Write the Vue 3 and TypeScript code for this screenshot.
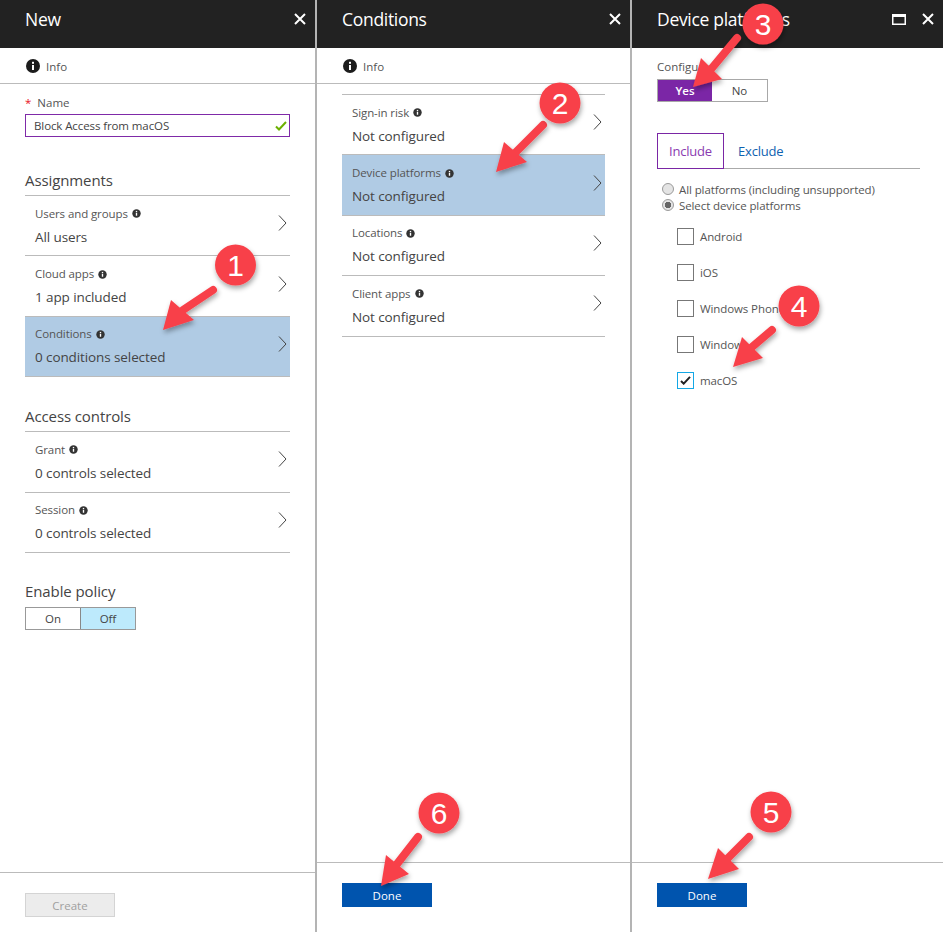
<script setup lang="ts">
interface Row { label: string; value: string; active?: boolean }
interface Mark { n: number; cx: number; cy: number; tail: [number, number]; neck: [number, number]; tip: [number, number]; a: [number, number]; b: [number, number] }

const assignments: Row[] = [
  { label: 'Users and groups', value: 'All users' },
  { label: 'Cloud apps', value: '1 app included' },
  { label: 'Conditions', value: '0 conditions selected', active: true },
]
const access: Row[] = [
  { label: 'Grant', value: '0 controls selected' },
  { label: 'Session', value: '0 controls selected' },
]
const conditions: Row[] = [
  { label: 'Sign-in risk', value: 'Not configured' },
  { label: 'Device platforms', value: 'Not configured', active: true },
  { label: 'Locations', value: 'Not configured' },
  { label: 'Client apps', value: 'Not configured' },
]
const platforms = [
  { name: 'Android', on: false },
  { name: 'iOS', on: false },
  { name: 'Windows Phone', on: false },
  { name: 'Windows', on: false },
  { name: 'macOS', on: true },
]
const marks: Mark[] = [
  { n: 1, cx: 235.5, cy: 265, tail: [213, 290], neck: [183, 310], tip: [163, 330], a: [171, 300], b: [194, 320] },
  { n: 2, cx: 560, cy: 103, tail: [543, 125], neck: [516, 152], tip: [496, 172], a: [504, 142], b: [527, 162] },
  { n: 3, cx: 763, cy: 24, tail: [737, 38], neck: [712, 68], tip: [693, 87], a: [701, 58], b: [722, 79] },
  { n: 4, cx: 799, cy: 306, tail: [772, 330], neck: [752, 347], tip: [733, 367], a: [742, 337], b: [763, 358] },
  { n: 5, cx: 771, cy: 812, tail: [749, 837], neck: [728, 858], tip: [708, 879], a: [718, 848], b: [739, 869] },
  { n: 6, cx: 439, cy: 813, tail: [418, 837], neck: [397, 864], tip: [381, 886], a: [386, 855], b: [409, 874] },
]
const pts = (m: Mark) => [m.tip, m.a, m.b].map((p) => p.join(',')).join(' ')
</script>

<template>
  <div class="page">
    <section class="blade first">
      <header class="head">
        <h1>New</h1>
        <svg class="close" viewBox="0 0 12 12"><path d="M1 1l10 10M11 1L1 11" /></svg>
      </header>
      <div class="info">
        <svg class="i-big" viewBox="0 0 16 16"><circle cx="8" cy="8" r="7" /><rect x="7" y="7" width="2" height="5" /><rect x="7" y="3.8" width="2" height="2" /></svg>
        <span>Info</span>
      </div>
      <div class="body">
        <div class="name-label"><span class="req">*</span><span class="nm">Name</span></div>
        <div class="name-input">
          <span>Block Access from macOS</span>
          <svg class="ok" viewBox="0 0 12 10"><path d="M1 5.500l3 3L11 1" /></svg>
        </div>
        <h2 class="sec assign">Assignments</h2>
        <ul class="rows">
          <li v-for="r in assignments" :key="r.label" class="row" :class="{ active: r.active }">
            <div class="txt">
              <div class="lbl">{{ r.label }}<svg class="i-small" viewBox="0 0 16 16"><circle cx="8" cy="8" r="7.5" /><rect x="6.8" y="7" width="2.4" height="5" /><rect x="6.8" y="3.4" width="2.4" height="2.4" /></svg></div>
              <div class="val">{{ r.value }}</div>
            </div>
            <svg class="chev" viewBox="0 0 9 16"><path d="M1 .5L8 8l-7 7.5" /></svg>
          </li>
        </ul>
        <h2 class="sec controls">Access controls</h2>
        <ul class="rows">
          <li v-for="r in access" :key="r.label" class="row">
            <div class="txt">
              <div class="lbl">{{ r.label }}<svg class="i-small" viewBox="0 0 16 16"><circle cx="8" cy="8" r="7.5" /><rect x="6.8" y="7" width="2.4" height="5" /><rect x="6.8" y="3.4" width="2.4" height="2.4" /></svg></div>
              <div class="val">{{ r.value }}</div>
            </div>
            <svg class="chev" viewBox="0 0 9 16"><path d="M1 .5L8 8l-7 7.5" /></svg>
          </li>
        </ul>
        <h2 class="sec policy">Enable policy</h2>
        <div class="toggle">
          <span>On</span>
          <span class="off">Off</span>
        </div>
      </div>
      <footer class="foot short">
        <button class="create" type="button">Create</button>
      </footer>
    </section>

    <section class="blade second">
      <header class="head">
        <h1>Conditions</h1>
        <svg class="close" viewBox="0 0 12 12"><path d="M1 1l10 10M11 1L1 11" /></svg>
      </header>
      <div class="info">
        <svg class="i-big" viewBox="0 0 16 16"><circle cx="8" cy="8" r="7" /><rect x="7" y="7" width="2" height="5" /><rect x="7" y="3.8" width="2" height="2" /></svg>
        <span>Info</span>
      </div>
      <div class="body">
        <ul class="rows cond">
          <li v-for="r in conditions" :key="r.label" class="row" :class="{ active: r.active }">
            <div class="txt">
              <div class="lbl">{{ r.label }}<svg class="i-small" viewBox="0 0 16 16"><circle cx="8" cy="8" r="7.5" /><rect x="6.8" y="7" width="2.4" height="5" /><rect x="6.8" y="3.4" width="2.4" height="2.4" /></svg></div>
              <div class="val">{{ r.value }}</div>
            </div>
            <svg class="chev" viewBox="0 0 9 16"><path d="M1 .5L8 8l-7 7.5" /></svg>
          </li>
        </ul>
      </div>
      <footer class="foot">
        <button class="done" type="button">Done</button>
      </footer>
    </section>

    <section class="blade third">
      <header class="head">
        <h1>Device platforms</h1>
        <svg class="max" viewBox="0 0 14 11"><path d="M0 0h14v11H0zM1.500 3v6.500h11V3z" fill-rule="evenodd" /></svg>
        <svg class="close" viewBox="0 0 12 12"><path d="M1 1l10 10M11 1L1 11" /></svg>
      </header>
      <div class="body plat">
        <div class="cfg">Configure</div>
        <div class="toggle yesno">
          <span class="yes">Yes</span>
          <span>No</span>
        </div>
        <div class="tabs">
          <span class="tab on">Include</span>
          <span class="tab">Exclude</span>
        </div>
        <div class="radio"><i class="dot"></i>All platforms (including unsupported)</div>
        <div class="radio"><i class="dot sel"></i>Select device platforms</div>
        <ul class="checks">
          <li v-for="p in platforms" :key="p.name">
            <span class="box" :class="{ on: p.on }">
              <svg v-if="p.on" viewBox="0 0 12 10"><path d="M1 5.500l3 3L11 1" /></svg>
            </span>
            {{ p.name }}
          </li>
        </ul>
      </div>
      <footer class="foot">
        <button class="done" type="button">Done</button>
      </footer>
    </section>

    <svg class="marks" viewBox="0 0 943 932" aria-hidden="true">
      <defs>
        <filter id="sh" x="-30%" y="-30%" width="170%" height="170%">
          <feDropShadow dx="1" dy="3" stdDeviation="2.500" flood-color="#000" flood-opacity=".35" />
        </filter>
      </defs>
      <g v-for="m in marks" :key="m.n">
        <g filter="url(#sh)">
          <line :x1="m.tail[0]" :y1="m.tail[1]" :x2="m.neck[0]" :y2="m.neck[1]" class="shaft" />
          <polygon :points="pts(m)" class="head-tri" />
        </g>
        <circle :cx="m.cx" :cy="m.cy" r="20.500" class="disc" filter="url(#sh)" />
        <text :x="m.cx" :y="m.cy + 11" class="num">{{ m.n }}</text>
      </g>
    </svg>
  </div>
</template>

<style>
html, body { margin: 0; background: #fff; }
</style>

<style scoped>
.page {
  position: relative;
  width: 943px;
  height: 932px;
  display: grid;
  grid-template-columns: 317px 315px 311px;
  overflow: hidden;
  font-family: "Open Sans", "Noto Sans", sans-serif;
  color: #444;
  background: #fff;
}
.blade {
  display: flex;
  flex-direction: column;
  height: 932px;
  box-sizing: border-box;
  border-right: 2px solid #b4b4b4;
  min-width: 0;
}
.third { border-right: 0; }
.head {
  height: 48px;
  flex: none;
  background: #222;
  display: flex;
  align-items: center;
  padding: 0 9px 10px 25px;
  box-sizing: border-box;
  color: #fff;
}
.head h1 {
  margin: 0;
  flex: 1;
  font-size: 17.500px;
  font-weight: 400;
  letter-spacing: -.3px;
}
.close { width: 12px; height: 12px; fill: none; stroke: #fff; stroke-width: 2; }
.max { width: 14px; height: 11px; fill: #fff; margin-right: 16px; }
.info {
  height: 36px;
  flex: none;
  display: flex;
  align-items: center;
  gap: 5px;
  padding: 1px 0 0 25px;
  box-sizing: border-box;
  border-bottom: 1px solid #bbb;
  font-size: 11.500px;
  color: #555;
}
.i-big { width: 16px; height: 16px; fill: #fff; }
.i-big circle { fill: #1c1c1c; }
.body { flex: 1; padding: 0 25px; min-height: 0; }
.name-label { margin-top: 10px; height: 20px; line-height: 17px; font-size: 11.500px; color: #555; }
.req { color: #e81123; }
.nm { margin-left: 6px; }
.name-input {
  height: 23px;
  box-sizing: border-box;
  border: 1px solid #7f2aa8;
  display: flex;
  align-items: center;
  justify-content: space-between;
  padding: 0 2px 0 8px;
  font-size: 11.500px;
  color: #444;
  letter-spacing: -.1px;
}
.ok { width: 12px; height: 10px; fill: none; stroke: #6cb000; stroke-width: 2; }
.sec { margin: 0; font-weight: 400; font-size: 15px; line-height: 20px; color: #444; letter-spacing: -.1px; }
.assign { margin-top: 33px; height: 25px; }
.controls { margin-top: 29px; height: 25px; }
.policy { margin-top: 28px; height: 26px; }
.rows { list-style: none; margin: 0; padding: 0; border-top: 1px solid #bbb; }
.cond { margin-top: 10px; }
.row {
  height: 60.400px;
  box-sizing: border-box;
  border-bottom: 1px solid #bbb;
  display: flex;
  align-items: center;
  justify-content: space-between;
  padding: 0 3px 5px 10px;
}
.row.active { background: #b0cbe4; }
.txt { padding-top: 4px; }
.lbl { display: flex; align-items: center; gap: 4px; font-size: 11.500px; line-height: 18px; color: #555; letter-spacing: -.1px; }
.val { margin-top: 5px; font-size: 13.500px; line-height: 18px; color: #444; letter-spacing: -.1px; }
.i-small { width: 9px; height: 9px; fill: #fff; }
.i-small circle { fill: #333; }
.chev { width: 9px; height: 16px; fill: none; stroke: #444; stroke-width: 1; }
.toggle {
  display: grid;
  grid-template-columns: 54px 55px;
  width: 111px;
  height: 23px;
  box-sizing: border-box;
  border: 1px solid #999;
  font-size: 11.500px;
  line-height: 21px;
  text-align: center;
  color: #444;
}
.off { background: #bdeafc; border-left: 1px solid #888; }
.foot {
  flex: none;
  height: 70px;
  box-sizing: border-box;
  border-top: 1px solid #bbb;
  padding: 20px 25px 0;
}
.foot.short { height: 60px; }
button {
  display: block;
  width: 90px;
  height: 24px;
  padding: 0;
  border: 0;
  font-family: inherit;
  font-size: 11.500px;
}
.done { background: #0054ae; color: #fff; }
.create { background: #ececec; color: #a0a0a0; border: 1px solid #d4d4d4; }
.plat { padding: 0 23px 0 25px; }
.cfg { margin-top: 10px; height: 21px; line-height: 17px; font-size: 11.500px; color: #555; }
.yesno { border-color: #a8a8a8; }
.yes { background: #7b26a6; color: #fff; font-weight: 600; }
.tabs {
  margin-top: 31px;
  height: 36px;
  display: flex;
  box-sizing: border-box;
  border-bottom: 1px solid #aaa;
  font-size: 13px;
}
.tab {
  box-sizing: border-box;
  height: 36px;
  line-height: 36px;
  padding: 0 11px;
  margin-left: 3px;
  color: #0f62b0;
  letter-spacing: -.2px;
}
.tab.on {
  width: 67px;
  margin-left: 0;
  line-height: 34px;
  border: 1px solid #7a26a5;
  color: #8a3ab0;
}
.radio {
  display: flex;
  align-items: center;
  height: 16px;
  padding-left: 5px;
  font-size: 11.500px;
  color: #555;
  letter-spacing: -.1px;
}
.tabs + .radio { margin-top: 12px; }
.dot {
  width: 12px;
  height: 12px;
  border-radius: 50%;
  box-sizing: border-box;
  border: 1px solid #9a9a9a;
  background: #e4e4e4;
  margin-right: 5px;
}
.dot.sel { background: radial-gradient(circle, #666 0 3px, #e4e4e4 3.500px); }
.checks { list-style: none; margin: 5px 0 0; padding: 0 0 0 20px; }
.checks li {
  display: flex;
  align-items: center;
  height: 36px;
  gap: 6px;
  font-size: 11.500px;
  color: #555;
  letter-spacing: -.1px;
}
.box {
  width: 17px;
  height: 17px;
  box-sizing: border-box;
  border: 1.500px solid #777;
  display: flex;
  align-items: center;
  justify-content: center;
}
.box.on { border: 1px solid #14a8e6; }
.box svg { width: 11px; height: 9px; fill: none; stroke: #222; stroke-width: 2.200; }
.marks { position: absolute; inset: 0; width: 943px; height: 932px; pointer-events: none; }
.shaft { stroke: #f8414a; stroke-width: 8; stroke-linecap: round; }
.head-tri { fill: #f8414a; }
.disc { fill: #f8414a; }
.num { fill: #fff; font-family: "Liberation Sans", Arial, sans-serif; font-size: 30px; text-anchor: middle; }
</style>
